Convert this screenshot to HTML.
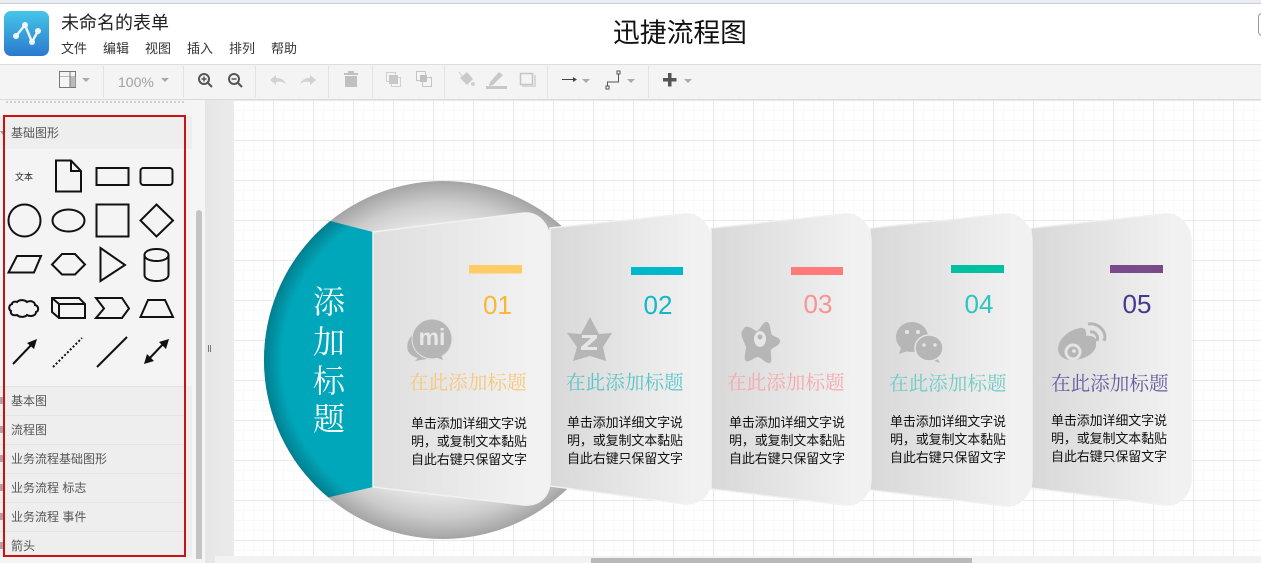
<!DOCTYPE html>
<html><head><meta charset="utf-8">
<style>
html,body{margin:0;padding:0;width:1261px;height:563px;overflow:hidden;background:#fff;font-family:"Liberation Sans","Noto Sans CJK SC",sans-serif}
.a{position:absolute;white-space:nowrap}
.row{position:absolute;left:0;width:185px;height:28px;background:#eee;border-top:1px solid #e4e4e4}
.row span{position:absolute;left:11px;top:6px;font-size:12px;line-height:16px;color:#555}
.row i{position:absolute;left:0;top:10px;width:3px;height:7px;background:#b9a0a0}
.sep{position:absolute;top:66px;width:1px;height:32px;background:#e2e2e2}
</style></head><body>
<div class="a" style="left:0;top:0;width:1261px;height:3px;background:#e9edf3;border-bottom:1px solid #c9ced4"></div>
<div class="a" style="left:4px;top:11px;width:45px;height:45px;border-radius:7px;background:linear-gradient(#46c5e8,#2b7acd)"></div>
<svg class="a" style="left:4px;top:11px" width="45" height="45"><path d="M12 25L21 14L28 31L34 20" fill="none" stroke="#e8f5fb" stroke-width="2.500"/><circle cx="12" cy="25" r="3" fill="#eef8fc"/><circle cx="21" cy="14" r="3" fill="#eef8fc"/><circle cx="28" cy="31" r="3" fill="#eef8fc"/><circle cx="34" cy="20" r="3" fill="#eef8fc"/></svg>
<div class="a" style="left:61px;top:12px;font-size:18px;line-height:22px;color:#222">未命名的表单</div>
<div class="a" style="left:61px;top:41px;font-size:13px;line-height:16px;color:#333">文件</div>
<div class="a" style="left:103px;top:41px;font-size:13px;line-height:16px;color:#333">编辑</div>
<div class="a" style="left:145px;top:41px;font-size:13px;line-height:16px;color:#333">视图</div>
<div class="a" style="left:187px;top:41px;font-size:13px;line-height:16px;color:#333">插入</div>
<div class="a" style="left:229px;top:41px;font-size:13px;line-height:16px;color:#333">排列</div>
<div class="a" style="left:271px;top:41px;font-size:13px;line-height:16px;color:#333">帮助</div>
<div class="a" style="left:613px;top:16px;font-size:26.8px;line-height:34px;color:#111">迅捷流程图</div>
<div class="a" style="left:1258px;top:13px;width:8px;height:21px;border:1px solid #999;border-radius:4px"></div>

<div class="a" style="left:0;top:64px;width:1261px;height:34px;background:#f4f4f4;border-top:1px solid #ddd;border-bottom:2px solid #d9d9d9"></div>
<div class="sep" style="left:103px"></div><div class="sep" style="left:183px"></div><div class="sep" style="left:255px"></div><div class="sep" style="left:328px"></div><div class="sep" style="left:372px"></div><div class="sep" style="left:444px"></div><div class="sep" style="left:547px"></div><div class="sep" style="left:648px"></div>
<div class="a" style="left:118px;top:74px;font-size:14px;line-height:16px;color:#a0a0a0">100%</div>
<svg class="a" style="left:0;top:64px" width="720" height="36">
<rect x="59.500" y="7.500" width="16" height="16" fill="none" stroke="#777"/><path d="M60 12.500H75" stroke="#bbb"/><rect x="70" y="13" width="5.500" height="10" fill="#bbb"/><path d="M70 8V23" stroke="#777"/>
<g fill="#aaa"><path d="M82 14h8l-4 4zM161 14h8l-4 4zM582 15h8l-4 4zM627 15h8l-4 4zM684 15h8l-4 4z"/></g>
<g fill="none" stroke="#555" stroke-width="2"><circle cx="204" cy="15" r="5"/><path d="M208 19l4 4"/><path d="M201.500 15h5M204 12.500v5" stroke-width="1.500"/><circle cx="234" cy="15" r="5"/><path d="M238 19l4 4"/><path d="M231.500 15h5" stroke-width="1.500"/></g>
<g fill="#d2d2d2"><path d="M270 16l6-5v3c5 0 9 2 10 7-2-3-5-4-10-3v3z"/><path d="M316 16l-6-5v3c-5 0-9 2-10 7 2-3 5-4 10-3v3z"/><path d="M344 9h14v2h-14zM348 7h6v2h-6zM345 12h12v11h-12z" fill="#c0c0c0"/></g>
<g fill="none" stroke="#d0d0d0"><rect x="386.500" y="8.500" width="9" height="9"/><rect x="391.500" y="13.500" width="9" height="9"/></g><rect x="389" y="11" width="9" height="9" fill="#c8c8c8"/>
<g fill="none" stroke="#c4c4c4"><rect x="416.500" y="7.500" width="9" height="9"/><rect x="422.500" y="13.500" width="9" height="9"/></g><rect x="420" y="11" width="7" height="7" fill="#c0c0c0"/>
<path d="M460 14l7-6 6 7-6 6z" fill="#cacaca"/><path d="M459 8l3 4" stroke="#d0d0d0"/><circle cx="473" cy="20" r="2" fill="#d0d0d0"/>
<path d="M490 18l9-10 4 3-10 10-4 1z" fill="#c8c8c8"/><rect x="486" y="22" width="21" height="3" fill="#c8c8c8"/>
<rect x="520.500" y="9.500" width="12" height="11" fill="none" stroke="#c4c4c4" stroke-width="1.500"/><path d="M522 22h13v-11" fill="none" stroke="#d8d8d8" stroke-width="2"/>
<path d="M562 15.500h14" stroke="#444"/><path d="M573 13l4 2.500-4 2.500z" fill="#444"/>
<path d="M607.500 22v-4h11v-9" fill="none" stroke="#555"/><rect x="606" y="22" width="3" height="3" fill="#fff" stroke="#555"/><rect x="617" y="7" width="3" height="3" fill="#fff" stroke="#555"/>
<path d="M668 9h3.500v5h5v3.500h-5v5H668v-5h-5V14h5z" fill="#555"/>
</svg>

<!-- sidebar -->
<div class="a" style="left:0;top:100px;width:205px;height:463px;background:#f4f4f4"></div>
<div class="a" style="left:205px;top:100px;width:29px;height:463px;background:linear-gradient(90deg,#e6e6e6,#ebebeb)"></div>
<div class="a" style="left:193px;top:100px;width:12px;height:463px;background:#f5f5f5"></div>
<div class="a" style="left:196px;top:210px;width:6px;height:349px;background:#c4c4c4;border-radius:3px 3px 0 0"></div>
<div class="a" style="left:6px;top:101px;width:178px;border-top:2px dotted #d0d0d0"></div>
<div class="a" style="left:208px;top:345px;width:1px;height:7px;background:#777;box-shadow:2px 0 0 #777"></div>
<div class="a" style="left:0;top:116px;width:192px;height:33px;background:#eee"></div>
<div class="a" style="left:11px;top:125px;font-size:12px;line-height:16px;color:#555">基础图形</div>
<div class="a" style="left:0;top:131px;border:3px solid transparent;border-top:4px solid #999"></div>
<div class="a" style="left:0;top:386px;width:192px;height:171px;background:#eee"></div>
<div class="row" style="top:386px"><i></i><span>基本图</span></div>
<div class="row" style="top:415px"><i></i><span>流程图</span></div>
<div class="row" style="top:444px"><i></i><span>业务流程基础图形</span></div>
<div class="row" style="top:473px"><i></i><span>业务流程 标志</span></div>
<div class="row" style="top:502px"><i></i><span>业务流程 事件</span></div>
<div class="row" style="top:531px;height:25px"><i></i><span>箭头</span></div>
<div class="a" style="left:15px;top:171px;font-size:9px;line-height:12px;color:#222">文本</div>
<svg class="a" style="left:0;top:100px" width="190" height="290" viewBox="0 100 190 290"><g fill="#fff" fill-opacity="0" stroke="#111" stroke-width="2">
<path d="M56 160.500H71L81 171V191.500H56Z M71 160.500V171H81"/><rect x="96.500" y="168" width="32" height="17"/><rect x="140.500" y="168" width="32" height="17" rx="3"/>
<circle cx="24.500" cy="220.500" r="16"/><ellipse cx="68.500" cy="220.500" rx="16" ry="11"/><rect x="96.500" y="204.500" width="32" height="32"/><path d="M156.500 204.500L173 220.500L156.500 236.500L140.500 220.500Z"/>
<path d="M17 256H41L34 272.500H8.500Z"/><path d="M62 254H75L85 264.500L75 274.500H62L52 264.500Z"/><path d="M100.500 248L125 265L100.500 281Z"/><path d="M144.500 255c0-8 24-8 24 0v20c0 8-24 8-24 0z M144.500 255c0 8 24 8 24 0"/>
<path d="M17 302c3-3 8-2 10 0 4-2 8 0 8 3 4 1 4 6 1 7 0 4-6 5-9 3-3 3-8 2-10 0-4 1-7-1-6-4-3-2-2-6 1-7 0-2 3-3 5-2z"/><path d="M52 298H79L85 304V318H59L52 312Z M52 298L59 304H85 M59 304V318"/><path d="M96 298H122L129 308.500L122 318H96L104 308.500Z"/><path d="M140.500 317L148 300H165L173 317Z"/>
<path d="M13 364L35 341"/><path d="M53 367L82 338" stroke-dasharray="2 2"/><path d="M97 367L127 337"/><path d="M146 362L166 341"/></g>
<path d="M37 339L34 349L27 343ZM144 364L147 354L154 361ZM169 339L166 349L159 342Z" fill="#111"/></svg>
<div class="a" style="left:3px;top:115px;width:179px;height:438px;border:2px solid #cc1111"></div>

<!-- canvas -->
<svg class="a" style="left:234px;top:100px" width="1027" height="456" viewBox="234 100 1027 456">
<defs>
<pattern id="m" width="10" height="10" patternUnits="userSpaceOnUse" x="3" y="0"><path d="M0 .5H10M.5 0V10" stroke="#f9f9f9" fill="none"/></pattern>
<pattern id="g" width="40" height="40" patternUnits="userSpaceOnUse" x="233" y="20"><path d="M0 .5H40M.5 0V40" stroke="#e9e9e9" fill="none"/></pattern>
<radialGradient id="c"><stop offset=".74" stop-color="#e8e8e8"/><stop offset=".88" stop-color="#cbcbcb"/><stop offset="1" stop-color="#a4a4a4"/></radialGradient>
<radialGradient id="t" gradientUnits="userSpaceOnUse" cx="443" cy="360" r="179"><stop offset=".9" stop-color="#00a6b9"/><stop offset="1" stop-color="#007f90"/></radialGradient>
<linearGradient id="k"><stop offset="0" stop-color="#d8d8d8"/><stop offset=".5" stop-color="#e6e6e6"/><stop offset=".88" stop-color="#f1f1f1"/></linearGradient>
<linearGradient id="k1"><stop offset="0" stop-color="#dedede"/><stop offset=".5" stop-color="#e9e9e9"/><stop offset=".9" stop-color="#f2f2f2"/></linearGradient>
<clipPath id="cc"><circle cx="443" cy="360" r="179"/></clipPath>
</defs>
<rect x="234" y="100" width="1027" height="456" fill="#fff"/>
<rect x="234" y="100" width="1027" height="456" fill="url(#m)"/>
<rect x="234" y="100" width="1027" height="456" fill="url(#g)"/>
<circle cx="443" cy="360" r="179" fill="url(#c)"/>
<path clip-path="url(#cc)" d="M250 200.500L373 232V487L250 515.600Z" fill="url(#t)"/>
<g stroke="#f1f1f1" stroke-width="1.500">
<path fill="url(#k)" d="M1031 228L1165 214C1180 213 1191 226 1191 242V478C1191 494 1180 506 1165 505L1031 488Z"/>
<path fill="url(#k)" d="M870 228L1005 214C1020 213 1032 226 1032 242V478C1032 494 1020 507 1005 506L870 490Z"/>
<path fill="url(#k)" d="M711 228L845 214C860 213 871 226 871 242V478C871 494 860 506 845 505L711 489Z"/>
<path fill="url(#k)" d="M550 228L685 214C700 213 711 226 711 242V478C711 494 700 505 685 504L550 486Z"/>
<path fill="url(#k1)" d="M373 232L524 213C540 212 550 226 550 242V480C550 496 540 506 524 505L373 487Z"/>
</g>
<rect x="469" y="265" width="53" height="8.500" fill="#ffcc66"/>
<rect x="631" y="267" width="52" height="8" fill="#00b8cc"/>
<rect x="791" y="267" width="52" height="8" fill="#ff7b7b"/>
<rect x="951" y="265" width="53" height="8" fill="#00c0a0"/>
<rect x="1110" y="265" width="53" height="8" fill="#7a4a8a"/>
<!-- icons -->
<g fill="#b6b6b6">
<path d="M414 333c-6 5-8 13-6 18 2 4 6 6 10 7l-3 3 12-2 6-3z"/>
<circle cx="432" cy="339" r="20" stroke="#e2e2e2" stroke-width="1"/><path d="M432 356l11 4-3-8 5-2z"/>
<path d="M590 317L599 334L612 333L603 347L606 361L590 356L573 361L577 347L567 333L581 334Z"/>
<path d="M745 327C750 325 754 331 757 331C760 330 763 321 767 322C771 323 770 332 772 335C775 337 781 338 780 342C779 346 773 347 771 350C770 354 773 361 770 363C766 364 762 358 758 357C754 357 749 363 746 361C743 359 746 351 746 347C745 343 740 336 742 331Z"/>
<ellipse cx="912" cy="337" rx="16" ry="15"/><path d="M901 348l-2 6 9-3z"/><path d="M937 358l3 5-8-3z"/>
<path d="M1058 349C1058 340 1068 330 1080 328C1085 327 1087 331 1086 336C1092 335 1098 338 1096 343C1097 350 1090 358 1075 360C1065 361 1058 356 1058 349Z"/>
</g>
<g fill="none" stroke="#b6b6b6" stroke-width="3"><path d="M1090 332C1095 331 1099 336 1097 341M1088 324C1098 322 1108 332 1104 341"/></g>
<ellipse cx="929" cy="348" rx="14" ry="13" fill="#b6b6b6" stroke="#e4e4e4" stroke-width="1.500"/>
<g fill="#e6e6e6"><circle cx="907" cy="332" r="2"/><circle cx="918" cy="332" r="2"/><circle cx="924" cy="345" r="1.700"/><circle cx="935" cy="345" r="1.700"/><path d="M582 335h15v3l-10 9h10v3h-16v-3l10-9h-9z"/><ellipse cx="760" cy="339" rx="6" ry="8"/></g>
<g fill="#b6b6b6"><circle cx="760" cy="337" r="2.500"/><path d="M749 347c4 4 10 5 15 1-4 7-12 6-15-1z"/></g>
<circle cx="1073" cy="352" r="8.500" fill="#e4e4e4"/><circle cx="1073" cy="352" r="5.500" fill="#b6b6b6"/><circle cx="1074" cy="351" r="1.800" fill="#e8e8e8"/>
<text x="432" y="345" font-family="Liberation Sans" font-size="23" font-weight="bold" fill="#e8e8e8" text-anchor="middle">mi</text>
<g font-family="Liberation Sans" font-size="26" text-anchor="middle">
<text x="497.500" y="314" fill="#f8b735">01</text><text x="658" y="314" fill="#12b8c8">02</text><text x="818" y="313" fill="#f79393">03</text><text x="979" y="313" fill="#2fc4c0">04</text><text x="1137" y="313" fill="#4a3690">05</text></g>
<g font-family="'Noto Serif CJK SC',serif" font-size="19.600">
<text x="409" y="389" fill="#f6c87a">在此添加标题</text><text x="566" y="389" fill="#5cc4c8">在此添加标题</text><text x="727" y="389" fill="#f5a9ac">在此添加标题</text><text x="889" y="390" fill="#6fcbc6">在此添加标题</text><text x="1051" y="390" fill="#6a5ba0">在此添加标题</text></g>
<g font-family="'Noto Serif CJK SC',serif" font-size="32" fill="#f4fbfc" text-anchor="middle"><text x="329" y="313">添</text><text x="329" y="353">加</text><text x="329" y="392">标</text><text x="329" y="430">题</text></g>
<g font-family="'WenQuanYi Zen Hei','Noto Sans CJK SC',sans-serif" font-size="13" fill="#111">
<text x="411" y="428" textLength="116">单击添加详细文字说</text><text x="411" y="446" textLength="116">明，或复制文本黏贴</text><text x="411" y="464" textLength="116">自此右键只保留文字</text>
<text x="567" y="427" textLength="116">单击添加详细文字说</text><text x="567" y="445" textLength="116">明，或复制文本黏贴</text><text x="567" y="463" textLength="116">自此右键只保留文字</text>
<text x="729" y="427" textLength="116">单击添加详细文字说</text><text x="729" y="445" textLength="116">明，或复制文本黏贴</text><text x="729" y="463" textLength="116">自此右键只保留文字</text>
<text x="890" y="426" textLength="116">单击添加详细文字说</text><text x="890" y="444" textLength="116">明，或复制文本黏贴</text><text x="890" y="462" textLength="116">自此右键只保留文字</text>
<text x="1051" y="425" textLength="116">单击添加详细文字说</text><text x="1051" y="443" textLength="116">明，或复制文本黏贴</text><text x="1051" y="461" textLength="116">自此右键只保留文字</text>
</g>
</svg>
<div class="a" style="left:215px;top:556px;width:1046px;height:7px;background:#f2f2f2"></div>
<div class="a" style="left:591px;top:558px;width:381px;height:5px;background:#b9b9b9"></div>
</body></html>
